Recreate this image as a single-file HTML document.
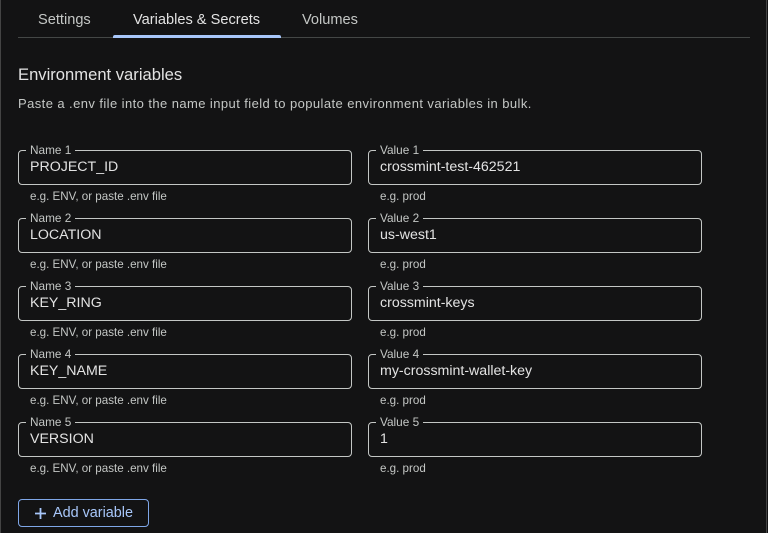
<!DOCTYPE html>
<html><head><style>
*{margin:0;padding:0;box-sizing:border-box}
body{width:768px;height:533px;background:#131314;font-family:"Liberation Sans",sans-serif;color:#e3e3e3;position:relative;overflow:hidden}
.edge{position:absolute;top:0;bottom:0;width:1px;background:#444}
.tabs{position:absolute;left:18px;top:0;width:732px;height:38px;border-bottom:1px solid #444746}
.tab{position:absolute;top:12px;font-size:14.6px;color:#c4c7c5}
.ind{position:absolute;left:113px;top:35px;width:168px;height:3px;background:#a8c7fa;border-radius:2px 2px 0 0}
h2{position:absolute;left:18px;top:65px;font-size:16.6px;font-weight:normal;color:#e3e3e3}
.desc{position:absolute;left:18px;top:96px;font-size:13px;letter-spacing:0.42px;color:#c4c7c5}
.f{position:absolute;width:334px;height:35px;border:1px solid #c4c7c5;border-radius:4px}
.f .l{position:absolute;left:7px;top:-8px;font-size:11.8px;color:#c4c7c5;background:#131314;padding:0 4px;line-height:14px}
.f .v{position:absolute;left:11px;top:8px;font-size:14.2px;color:#e3e3e3}
.h{position:absolute;font-size:11.6px;color:#c4c7c5}
.btn{position:absolute;left:18px;top:499px;width:131px;height:28px;border:1px solid #7fa7e8;border-radius:4px;color:#a8c7fa;font-size:14.4px}
</style></head><body>
<div class="edge" style="left:0"></div><div class="edge" style="left:766px"></div>
<div class="tabs"></div>
<div class="tab" style="left:38px">Settings</div>
<div class="tab" style="left:133px;color:#e3e3e3">Variables &amp; Secrets</div>
<div class="tab" style="left:302px">Volumes</div>
<div class="ind"></div>
<h2>Environment variables</h2>
<div class="desc">Paste a .env file into the name input field to populate environment variables in bulk.</div>

<div class="f" style="left:18px;top:150px"><span class="l">Name 1</span><span class="v">PROJECT_ID</span></div>
<div class="f" style="left:368px;top:150px"><span class="l">Value 1</span><span class="v">crossmint-test-462521</span></div>
<div class="h" style="left:30px;top:190px">e.g. ENV, or paste .env file</div><div class="h" style="left:380px;top:190px">e.g. prod</div>

<div class="f" style="left:18px;top:218px"><span class="l">Name 2</span><span class="v">LOCATION</span></div>
<div class="f" style="left:368px;top:218px"><span class="l">Value 2</span><span class="v">us-west1</span></div>
<div class="h" style="left:30px;top:258px">e.g. ENV, or paste .env file</div><div class="h" style="left:380px;top:258px">e.g. prod</div>

<div class="f" style="left:18px;top:286px"><span class="l">Name 3</span><span class="v">KEY_RING</span></div>
<div class="f" style="left:368px;top:286px"><span class="l">Value 3</span><span class="v">crossmint-keys</span></div>
<div class="h" style="left:30px;top:326px">e.g. ENV, or paste .env file</div><div class="h" style="left:380px;top:326px">e.g. prod</div>

<div class="f" style="left:18px;top:354px"><span class="l">Name 4</span><span class="v">KEY_NAME</span></div>
<div class="f" style="left:368px;top:354px"><span class="l">Value 4</span><span class="v">my-crossmint-wallet-key</span></div>
<div class="h" style="left:30px;top:394px">e.g. ENV, or paste .env file</div><div class="h" style="left:380px;top:394px">e.g. prod</div>

<div class="f" style="left:18px;top:422px"><span class="l">Name 5</span><span class="v">VERSION</span></div>
<div class="f" style="left:368px;top:422px"><span class="l">Value 5</span><span class="v">1</span></div>
<div class="h" style="left:30px;top:462px">e.g. ENV, or paste .env file</div><div class="h" style="left:380px;top:462px">e.g. prod</div>

<div class="btn"><svg style="position:absolute;left:15px;top:7px" width="13" height="13" viewBox="0 0 13 13"><path d="M6.5 1v11M1 6.5h11" stroke="#a8c7fa" stroke-width="1.8"/></svg><span style="position:absolute;left:34px;top:5px">Add variable</span></div>
</body></html>
